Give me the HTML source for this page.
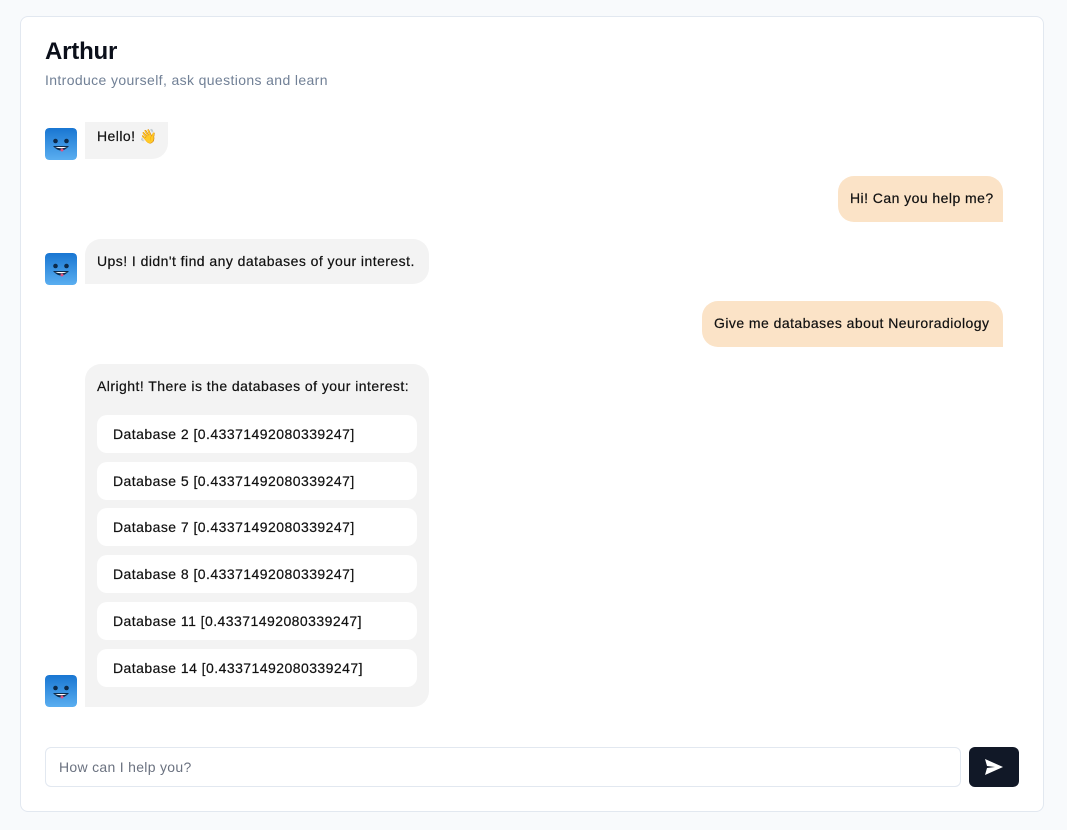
<!DOCTYPE html>
<html><head><style>
*{box-sizing:border-box;margin:0;padding:0}
body{width:1067px;height:830px;background:#f8fafc;font-family:"Liberation Sans",sans-serif;position:relative;overflow:hidden;color:#111}
.card{position:absolute;left:20px;top:16px;width:1024px;height:796px;background:#fff;border:1px solid #e2e8f0;border-radius:8px}
h1{position:absolute;left:45px;top:38px;font-size:24px;font-weight:bold;color:#0b0f1a;letter-spacing:-0.2px}
.sub{position:absolute;left:45px;top:72px;font-size:14px;color:#718096;letter-spacing:0.37px}
.b{position:absolute;font-size:14px;line-height:18px;padding:13px 0 0 12px;letter-spacing:0.45px;-webkit-text-stroke:0.2px #111;white-space:nowrap}
.bot{background:#f3f3f3;border-radius:16px 16px 16px 0}
.user{background:#fbe3c7;border-radius:16px 16px 0 16px}
.it{position:absolute;left:12px;width:320px;height:38px;background:#fff;border-radius:10px;padding:10px 16px;font-size:14px}
.av{position:absolute;left:45px;width:32px;height:32px;border-radius:4px}
.inp{position:absolute;left:45px;top:747px;width:916px;height:40px;border:1px solid #e2e8f0;border-radius:6px;font-size:14px;color:#6b7280;padding:11px 13px;letter-spacing:0.3px}
.btn{position:absolute;left:969px;top:747px;width:50px;height:40px;background:#111827;border-radius:6px}
</style></head><body>
<div class="card"></div>
<h1>Arthur</h1>
<div class="sub">Introduce yourself, ask questions and learn</div>

<svg class="av" style="top:128px" viewBox="0 0 32 32"><defs><linearGradient id="g" x1="0" y1="0" x2="0" y2="1"><stop offset="0" stop-color="#1976d2"/><stop offset="1" stop-color="#5aaef0"/></linearGradient></defs><rect width="32" height="32" rx="4" fill="url(#g)"/><circle cx="10.5" cy="13" r="2.3" fill="#0d2a4a"/><circle cx="21.5" cy="13" r="2.3" fill="#0d2a4a"/><path d="M8 18 Q16 27 24 18 Z" fill="#0d2a4a"/><path d="M10 19 H22 Q16 21.5 10 19Z" fill="#fff"/><circle cx="17" cy="22" r="1.5" fill="#e05080"/></svg>
<div class="b bot" style="left:85px;top:122px;width:83px;height:37px;border-radius:0 0 16px 0;padding-top:5px">Hello! 👋</div>

<div class="b user" style="left:838px;top:176px;width:165px;height:46px">Hi! Can you help me?</div>

<svg class="av" style="top:253px" viewBox="0 0 32 32"><rect width="32" height="32" rx="4" fill="url(#g)"/><circle cx="10.5" cy="13" r="2.3" fill="#0d2a4a"/><circle cx="21.5" cy="13" r="2.3" fill="#0d2a4a"/><path d="M8 18 Q16 27 24 18 Z" fill="#0d2a4a"/><path d="M10 19 H22 Q16 21.5 10 19Z" fill="#fff"/><circle cx="17" cy="22" r="1.5" fill="#e05080"/></svg>
<div class="b bot" style="left:85px;top:239px;width:344px;height:45px">Ups! I didn't find any databases of your interest.</div>

<div class="b user" style="left:702px;top:301px;width:301px;height:46px">Give me databases about Neuroradiology</div>

<svg class="av" style="top:675px" viewBox="0 0 32 32"><rect width="32" height="32" rx="4" fill="url(#g)"/><circle cx="10.5" cy="13" r="2.3" fill="#0d2a4a"/><circle cx="21.5" cy="13" r="2.3" fill="#0d2a4a"/><path d="M8 18 Q16 27 24 18 Z" fill="#0d2a4a"/><path d="M10 19 H22 Q16 21.5 10 19Z" fill="#fff"/><circle cx="17" cy="22" r="1.5" fill="#e05080"/></svg>
<div class="b bot" style="left:85px;top:364px;width:344px;height:343px">Alright! There is the databases of your interest:
<div class="it" style="top:51px">Database 2 [0.43371492080339247]</div>
<div class="it" style="top:98px">Database 5 [0.43371492080339247]</div>
<div class="it" style="top:144px">Database 7 [0.43371492080339247]</div>
<div class="it" style="top:191px">Database 8 [0.43371492080339247]</div>
<div class="it" style="top:238px">Database 11 [0.43371492080339247]</div>
<div class="it" style="top:285px">Database 14 [0.43371492080339247]</div>
</div>

<div class="inp">How can I help you?</div>
<div class="btn"><svg width="50" height="40" viewBox="0 0 50 40"><path d="M16 12 L34 20 L16 28 L18 21 L26 20 L18 19 Z" fill="#fff"/></svg></div>
</body></html>
